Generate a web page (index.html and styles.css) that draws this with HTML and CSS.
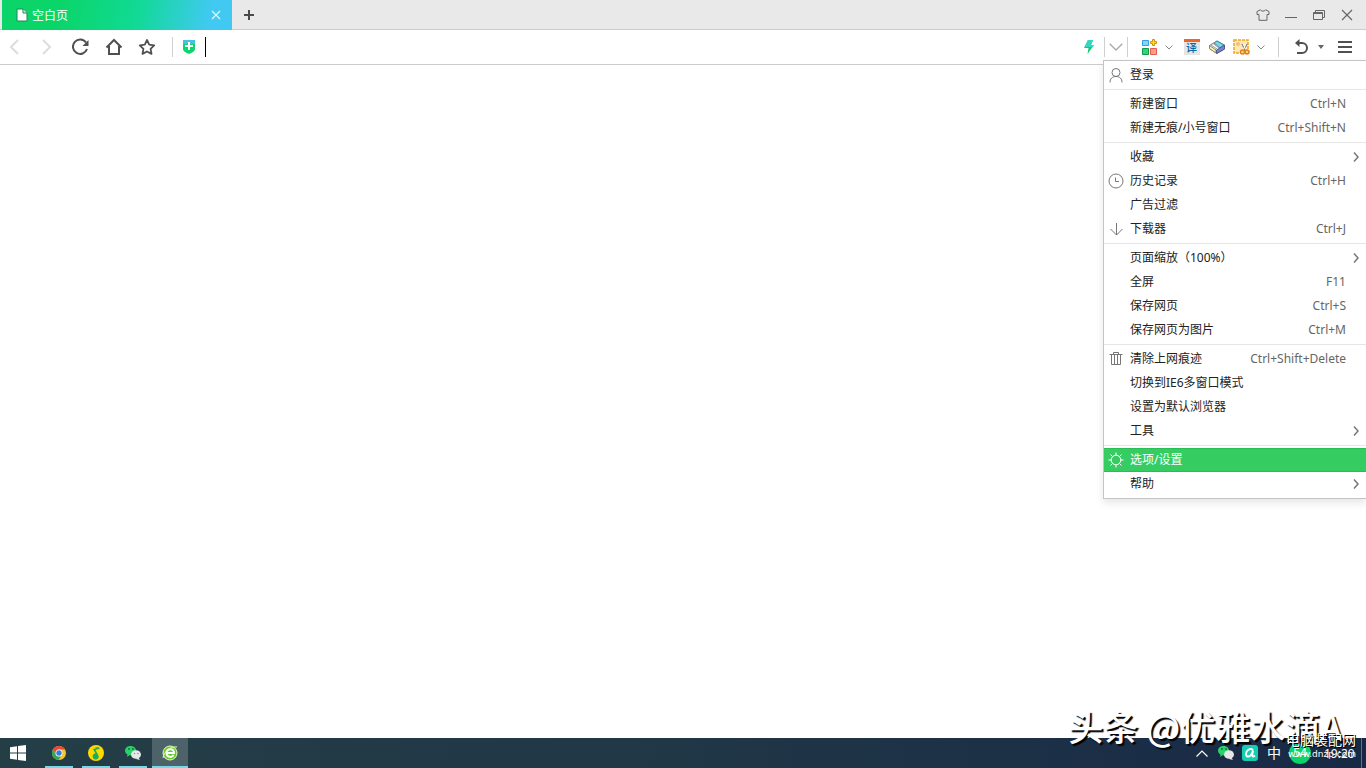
FILE: index.html
```html
<!DOCTYPE html>
<html lang="zh-CN">
<head>
    <meta charset="UTF-8">
    <meta name="viewport" content="width=device-width, initial-scale=1.0">
    <title>空白页</title>
    <link rel="stylesheet" href="styles.css">
</head>
<body>
    <header class="tabbar">
        <div class="tab">
            <svg width="12" height="14" viewBox="0 0 12 14"><path d="M1 1h6l4 4v8H1z" fill="#fff" stroke="#1b8a55"/><path d="M7 1v4h4" fill="#d5eee0" stroke="#1b8a55"/></svg>
            <span class="tab-title">空白页</span>
            <button class="tab-close" aria-label="关闭标签"><svg width="10" height="10" viewBox="0 0 10 10"><path d="M1 1l8 8M9 1L1 9" stroke="#e2f8ff" stroke-width="1.2"/></svg></button>
        </div>
        <button class="new-tab" aria-label="新建标签"><svg width="10" height="10" viewBox="0 0 10 10"><path d="M5 0v10M0 5h10" stroke="#4a4a4a" stroke-width="2"/></svg></button>
        <div class="window-buttons">
            <button aria-label="皮肤"><svg width="14" height="12" viewBox="0 0 14 12"><path d="M4.500.8L1 2.500v3h2v5.800h8V5.500h2v-3L9.500.8C9 2.600 5 2.600 4.500.8z" fill="none" stroke="#666" stroke-linejoin="round"/></svg></button>
            <button aria-label="最小化"><svg width="12" height="12" viewBox="0 0 12 12"><path d="M0 8.500h12" stroke="#666"/></svg></button>
            <button aria-label="还原"><svg width="12" height="12" viewBox="0 0 12 12"><path d="M2.500 3V1.500h9v7H10M.5 3.500h9v7h-9zM.5 4.500h9" fill="none" stroke="#666"/></svg></button>
            <button aria-label="关闭"><svg width="12" height="12" viewBox="0 0 12 12"><path d="M1 1l10 10M11 1L1 11" stroke="#666" stroke-width="1.200"/></svg></button>
        </div>
    </header>

    <nav class="toolbar">
        <div class="nav-buttons">
            <button aria-label="后退"><svg width="16" height="18" viewBox="0 0 16 18"><path d="M12 2L5 9l7 7" fill="none" stroke="#ddd" stroke-width="2"/></svg></button>
            <button aria-label="前进"><svg width="16" height="18" viewBox="0 0 16 18"><path d="M4 2l7 7-7 7" fill="none" stroke="#ddd" stroke-width="2"/></svg></button>
            <button aria-label="刷新"><svg width="18" height="18" viewBox="0 0 18 18"><path d="M14 4.500A7.200 7.200 0 1 0 15 11" fill="none" stroke="#505050" stroke-width="2"/><path d="M16.500 2v6h-6z" fill="#505050"/></svg></button>
            <button aria-label="主页"><svg width="18" height="18" viewBox="0 0 18 18"><path d="M1.500 9.500L9 2l7.500 7.500M4 8v8h10V8" fill="none" stroke="#505050" stroke-width="2"/></svg></button>
            <button aria-label="收藏"><svg width="18" height="18" viewBox="0 0 18 18"><path d="M9 2l2.200 4.600 5 .7-3.600 3.500.9 5.100L9 13.500l-4.500 2.400.9-5.100L1.800 7.300l5-.7z" fill="none" stroke="#505050" stroke-width="1.800" stroke-linejoin="round"/></svg></button>
        </div>
        <span class="divider"></span>
        <button class="shield" aria-label="网站安全"><svg width="12" height="14" viewBox="0 0 12 14"><path d="M0 0h12v9c0 2-3 4-6 5-3-1-6-3-6-5z" fill="#0bd66c"/><path d="M0 0h12v4H0z" fill="#47c0e4"/><path d="M6 2v8M2 6h8" stroke="#fff" stroke-width="2"/></svg></button>
        <input class="address" type="text" aria-label="地址栏">
        <button class="flash" aria-label="极速模式"><svg width="10" height="14" viewBox="0 0 10 14"><path d="M4 0h5L7 5h3L3.500 14l1-6H0z" fill="#09cf70"/><path d="M4 0h5L7 5h3L8.600 7H.6z" fill="#36d5bd"/></svg></button>
        <span class="divider"></span>
        <button class="history-toggle" aria-label="地址历史"><svg width="14" height="8" viewBox="0 0 14 8"><path d="M.7.7L7 7 13.300.7" fill="none" stroke="#aaa" stroke-width="1.300"/></svg></button>
        <span class="divider"></span>
        <div class="plugins">
            <button aria-label="扩展"><svg width="17" height="16" viewBox="0 0 17 16"><path d="M1.500 1.500h6v5h-6z" fill="#84d5fb" stroke="#329ce0"/><path d="M1.500 9.500h6v6h-6z" fill="#2bd779" stroke="#109b4c"/><path d="M9.500 9.500h6v6h-6z" fill="#ff9c8e" stroke="#e75c4e"/><path d="M11.500.5h2v2h2v2h-2v2h-2v-2h-2v-2h2z" fill="#ffde25" stroke="#d3910c"/></svg></button>
            <button class="mini" aria-label="更多扩展"><svg width="8" height="5" viewBox="0 0 8 5"><path d="M.5.5L4 4 7.500.5" fill="none" stroke="#888"/></svg></button>
            <button aria-label="翻译" class="translate"><span>译</span></button>
            <button aria-label="清理"><svg width="16" height="16" viewBox="0 0 16 16"><path d="M.5 6.500L8 2l7.500 4v4L8 14.500l-7.500-5z" fill="#fff" stroke="#777"/><path d="M5 4l3-2 7 4-4 3z" fill="#72d5f2" stroke="#5a8794"/><path d="M.5 6.500L7 11v3L.5 9.500z" fill="#fffaa5" stroke="#88866a"/><path d="M7.500 11l8-5v4l-8 4.500z" fill="#7186cf" stroke="#505a88"/><path d="M2 6l6 4M4 4.500l6 4.500" stroke="#999"/></svg></button>
            <button aria-label="截图"><svg width="17" height="16" viewBox="0 0 17 16"><path d="M1 1h14v13H1z" fill="#ffe9b8" stroke="#f2a321" stroke-width="1.500" stroke-dasharray="3 1"/><circle cx="5" cy="5" r="2" fill="#f1c273"/><path d="M9 5l4 7M14 5l-4 7" stroke="#777" stroke-width="1.500"/><path d="M10 5l3 6M13 5l-3 6" stroke="#fff"/><circle cx="9.500" cy="13" r="2" fill="#ffd678" stroke="#df8119" stroke-width="1.500"/><circle cx="14" cy="13" r="2" fill="#ffd678" stroke="#df8119" stroke-width="1.500"/></svg></button>
            <button class="mini" aria-label="截图选项"><svg width="8" height="5" viewBox="0 0 8 5"><path d="M.5.5L4 4 7.500.5" fill="none" stroke="#888"/></svg></button>
        </div>
        <span class="divider"></span>
        <div class="end-buttons">
            <button aria-label="恢复标签"><svg width="16" height="16" viewBox="0 0 16 16"><path d="M3 4h5a5 5 0 0 1 0 10H3" fill="none" stroke="#505050" stroke-width="2"/><path d="M5.500 0v8L1 4z" fill="#505050"/></svg></button>
            <button class="mini" aria-label="已关闭标签"><svg width="6" height="4" viewBox="0 0 6 4"><path d="M0 0h6L3 4z" fill="#666"/></svg></button>
            <button class="menu-button" aria-label="菜单"><svg width="14" height="12" viewBox="0 0 14 12"><path d="M0 1h14M0 6h14M0 11h14" stroke="#505050" stroke-width="2"/></svg></button>
        </div>
    </nav>

    <main class="page">
        <div class="menu">
            <button class="item"><svg class="icon" width="16" height="16" viewBox="0 0 16 16"><circle cx="8" cy="5.500" r="4"/><path d="M2 15.500c0-4 2.500-6 6-6s6 2 6 6"/></svg><span>登录</span></button>
            <hr>
            <button class="item"><span>新建窗口</span><kbd>Ctrl+N</kbd></button>
            <button class="item"><span>新建无痕/小号窗口</span><kbd>Ctrl+Shift+N</kbd></button>
            <hr>
            <button class="item"><span>收藏</span><svg class="arrow" width="6" height="10" viewBox="0 0 6 10"><path d="M1 .5L5 5 1 9.500"/></svg></button>
            <button class="item"><svg class="icon" width="16" height="16" viewBox="0 0 16 16"><circle cx="8" cy="8" r="7"/><path d="M7.500 4.500v4H11"/></svg><span>历史记录</span><kbd>Ctrl+H</kbd></button>
            <button class="item"><span>广告过滤</span></button>
            <button class="item"><svg class="icon" width="16" height="16" viewBox="0 0 16 16"><path d="M8.500 2v12M2.500 8l6 6 6-6"/></svg><span>下载器</span><kbd>Ctrl+J</kbd></button>
            <hr>
            <button class="item"><span>页面缩放（100%）</span><svg class="arrow" width="6" height="10" viewBox="0 0 6 10"><path d="M1 .5L5 5 1 9.500"/></svg></button>
            <button class="item"><span>全屏</span><kbd>F11</kbd></button>
            <button class="item"><span>保存网页</span><kbd>Ctrl+S</kbd></button>
            <button class="item"><span>保存网页为图片</span><kbd>Ctrl+M</kbd></button>
            <hr>
            <button class="item"><svg class="icon" width="16" height="16" viewBox="0 0 16 16"><path d="M1.500 3.500h13M5.500 3V1.500h5V3M3.500 3.500v10h9v-10M6.500 4v9M9.500 4v9"/></svg><span>清除上网痕迹</span><kbd>Ctrl+Shift+Delete</kbd></button>
            <button class="item"><span>切换到IE6多窗口模式</span></button>
            <button class="item"><span>设置为默认浏览器</span></button>
            <button class="item"><span>工具</span><svg class="arrow" width="6" height="10" viewBox="0 0 6 10"><path d="M1 .5L5 5 1 9.500"/></svg></button>
            <hr>
            <button class="item active"><svg class="icon" width="16" height="16" viewBox="0 0 16 16"><circle cx="8" cy="8" r="4.800"/><path d="M8 .5v3M8 12.500v3M.5 8h3M12.500 8h3M2.500 2.500l2 2M11.500 11.500l2 2M13.500 2.500l-2 2M4.500 11.500l-2 2"/></svg><span>选项/设置</span></button>
            <button class="item"><span>帮助</span><svg class="arrow" width="6" height="10" viewBox="0 0 6 10"><path d="M1 .5L5 5 1 9.500"/></svg></button>
        </div>
    </main>

    <footer class="taskbar">
        <button class="start" aria-label="开始"><svg width="16" height="16" viewBox="0 0 16 16"><path d="M0 2.300l7-1v6.200H0zM8 1.100L16 0v7.500H8zM0 8.500h7v6.200l-7-1zM8 8.500h8V16l-8-1.100z" fill="#fff"/></svg></button>
        <div class="apps">
            <button class="app" aria-label="Chrome"><svg width="16" height="16" viewBox="0 0 16 16"><circle cx="8" cy="8" r="7" fill="#f5c52c"/><path d="M1.900 4.500a7 7 0 0 1 12.200 0H8L5 9.500z" fill="#e64a3b"/><path d="M1.900 4.500L5 9.700 8 11.500h2L7.500 15A7 7 0 0 1 1.900 4.500z" fill="#31a65a"/><circle cx="8" cy="8" r="3.500" fill="#fff"/><circle cx="8" cy="8" r="2.700" fill="#347be2"/></svg></button>
            <button class="app" aria-label="QQ音乐"><svg width="16" height="16" viewBox="0 0 16 16"><circle cx="8" cy="8" r="8" fill="#ffd800"/><path d="M4.500 1c3 2 5.500 0 7.500 2.500L7.500 5l3 5.500a3 3 0 1 1-3-2L5 4l4-1z" fill="#16ae61"/></svg></button>
            <button class="app" aria-label="微信"><svg width="18" height="16" viewBox="0 0 18 16"><path d="M3 12l.5-2.500C-1 7 1 1 6.500 1S14 6.500 10 9.500c-1.500 1-3 1-4.500.8z" fill="#29d269"/><circle cx="5" cy="4" r="1" fill="#197542"/><circle cx="9" cy="4" r="1" fill="#197542"/><ellipse cx="12" cy="9.500" rx="5" ry="4.300" fill="#e7e7e7"/><path d="M14 12l2 3-4-1z" fill="#e7e7e7"/><circle cx="10.500" cy="8.500" r=".7" fill="#888"/><circle cx="14" cy="8.500" r=".7" fill="#888"/></svg></button>
            <button class="app current" aria-label="360浏览器"><svg width="16" height="16" viewBox="0 0 16 16"><circle cx="8" cy="8" r="7" fill="#66c928" stroke="#dfffbd"/><path d="M4.500 8H12c0-5-7.500-5-7.500 0 0 4.500 6 5 7 1.800" fill="none" stroke="#fff" stroke-width="2"/><path d="M1 13C2 6 9 1 15 2" fill="none" stroke="#dfffbd"/></svg></button>
        </div>
        <div class="tray">
            <button class="tray-up" aria-label="显示隐藏的图标"><svg width="12" height="7" viewBox="0 0 12 7"><path d="M.5 6.500L6 1l5.500 5.500" fill="none" stroke="#fff" stroke-width="1.200"/></svg></button>
            <button aria-label="微信消息"><svg width="18" height="16" viewBox="0 0 18 16"><path d="M3 12l.5-2.500C-1 7 1 1 6.500 1S14 6.500 10 9.500c-1.500 1-3 1-4.500.8z" fill="#29d269"/><circle cx="5" cy="4" r="1" fill="#197542"/><circle cx="9" cy="4" r="1" fill="#197542"/><ellipse cx="12" cy="9.500" rx="5" ry="4.300" fill="#e7e7e7"/><path d="M14 12l2 3-4-1z" fill="#e7e7e7"/></svg></button>
            <button aria-label="安全助手"><svg width="16" height="16" viewBox="0 0 16 16"><rect width="16" height="16" rx="3" fill="#14ceb0"/><path d="M11 5C8 2.500 4 5.500 4 9c0 4.500 5.500 3 7-3.500l-.7 3.500c-.5 3 .7 3 2.700 1.500" fill="none" stroke="#fff" stroke-width="2"/></svg></button>
            <button class="ime">中</button>
            <span class="score">54</span>
            <time class="clock">19:20</time>
            <span class="desktop-edge"></span>
        </div>
    </footer>

    <div class="watermark">头条 @优雅水滴A</div>
    <div class="site-mark"><span class="site-name">电脑装配网</span><span class="site-url">www.dnzp.com</span></div>
</body>
</html>
```
FILE: styles.css
```css
* {
    box-sizing: border-box;
}
body {
    margin: 0;
    height: 100vh;
    display: flex;
    flex-direction: column;
    position: relative;
    overflow: hidden;
    background: #fff;
    font-family: "Noto Sans", "Noto Sans CJK SC", sans-serif;
    font-size: 12px;
    color: #222;
}
button {
    display: flex;
    align-items: center;
    justify-content: center;
    padding: 0;
    border: none;
    background: none;
    font: inherit;
    color: inherit;
}
svg {
    flex: none;
}

/* tabs */
.tabbar {
    display: flex;
    height: 30px;
    padding-left: 2px;
    background: #e9e9e9;
    border-bottom: 1px solid #ccc;
}
.tab {
    display: flex;
    align-items: center;
    width: 230px;
    height: 30px;
    padding: 0 6px 0 14px;
    gap: 4px;
    background: linear-gradient(100deg, #0bd568 0%, #0bd568 25%, #10da94 58%, #41c9f2 90%);
    color: #fff;
}
.tab-title {
    flex: 1;
}
.tab-close {
    width: 20px;
    height: 20px;
}
.new-tab {
    width: 34px;
}
.window-buttons {
    display: flex;
    margin-left: auto;
    padding-right: 5px;
}
.window-buttons button {
    width: 28px;
}

/* toolbar */
.toolbar {
    display: flex;
    align-items: center;
    height: 35px;
    border-bottom: 1px solid #ccc;
}
.nav-buttons {
    display: flex;
    width: 175px;
    margin-left: -3px;
    padding-right: 8px;
}
.nav-buttons button {
    flex: 1;
}
.divider {
    width: 1px;
    height: 20px;
    background: #d0d0d0;
}
.shield {
    width: 32px;
}
.address {
    flex: 1;
    min-width: 0;
    height: 20px;
    padding: 0 4px;
    border: none;
    border-left: 1px solid #000;
    outline: none;
    font: inherit;
}
.flash {
    width: 30px;
}
.history-toggle {
    width: 22px;
}
.plugins {
    display: flex;
    align-items: center;
    width: 150px;
    padding-left: 9px;
}
.plugins button,
.end-buttons button {
    width: 25px;
    height: 24px;
}
.plugins .mini,
.end-buttons .mini {
    width: 14px;
}
.plugins .translate {
    margin-left: 3px;
}
.translate span {
    width: 16px;
    height: 16px;
    border-top: 3px solid #e9682b;
    background: #e5e5e5;
    color: #086aa5;
    font-size: 11px;
    line-height: 12px;
    font-weight: 500;
}
.end-buttons {
    display: flex;
    width: 87px;
    padding-left: 10px;
}
.end-buttons .menu-button {
    width: 34px;
}

/* main menu */
.page {
    flex: 1;
}
.menu {
    position: absolute;
    top: 60px;
    right: 0;
    width: 263px;
    padding: 2px 0;
    background: #fff;
    border: 1px solid #c4c4c4;
    border-right: none;
    box-shadow: 0 4px 8px rgba(0, 0, 0, 0.1);
}
.menu hr {
    height: 1px;
    margin: 2px 0;
    border: none;
    background: #e6e6e6;
}
.item {
    display: grid;
    grid-template-columns: 26px 1fr auto 20px;
    justify-items: start;
    width: 100%;
    height: 24px;
    line-height: 24px;
}
.item span {
    grid-column: 2;
    white-space: nowrap;
}
.item kbd {
    font: inherit;
    color: #666;
}
.item svg {
    fill: none;
    stroke: #777;
}
.item .icon {
    margin-left: 4px;
}
.item .arrow {
    grid-column: 4;
    justify-self: center;
    stroke-width: 1.5;
}
.item.active {
    background: #35cd62;
    box-shadow: inset 0 1px #29bd56, inset 0 -1px #29bd56;
    color: #fff;
}
.item.active svg {
    stroke: #fff;
}

/* taskbar */
.taskbar {
    display: flex;
    height: 30px;
    background: linear-gradient(to right, #243e46, #203746 50%, #182946);
    color: #fff;
}
.start {
    width: 36px;
}
.apps {
    display: flex;
    gap: 1px;
    padding-left: 5px;
}
.app {
    width: 36px;
    position: relative;
}
.app::after {
    content: "";
    position: absolute;
    left: 4px;
    right: 4px;
    bottom: 0;
    height: 2px;
    background: #76d9e7;
}
.app.current {
    background: #4d6269;
}
.app.current::after {
    left: 0;
    right: 0;
}
.tray {
    display: flex;
    align-items: center;
    margin-left: auto;
}
.tray button {
    width: 24px;
}
.tray .ime {
    font-size: 14px;
    line-height: 20px;
}
.score {
    width: 22px;
    height: 22px;
    margin: 0 13px 0 3px;
    border-radius: 50%;
    background: #0bd568;
    line-height: 22px;
    text-align: center;
}
.clock {
    width: 32px;
}
.desktop-edge {
    width: 1px;
    height: 30px;
    margin: 0 4px 0 5px;
    background: #66717f;
}

/* marks over the page */
.watermark {
    position: absolute;
    right: 24px;
    bottom: 18px;
    font-family: "Noto Sans CJK SC", sans-serif;
    font-size: 35px;
    font-weight: 500;
    line-height: 48px;
    color: #fff;
    text-shadow: 2px 2px 1px #000;
    white-space: nowrap;
}
.site-mark {
    position: absolute;
    right: 10px;
    bottom: 8px;
    display: flex;
    flex-direction: column;
    align-items: flex-end;
    color: #fff;
}
.site-name {
    font-size: 14px;
    line-height: 16px;
    text-shadow: 1px 1px #000;
}
.site-url {
    font-family: "DejaVu Sans", sans-serif;
    font-size: 9px;
    line-height: 12px;
}
```
